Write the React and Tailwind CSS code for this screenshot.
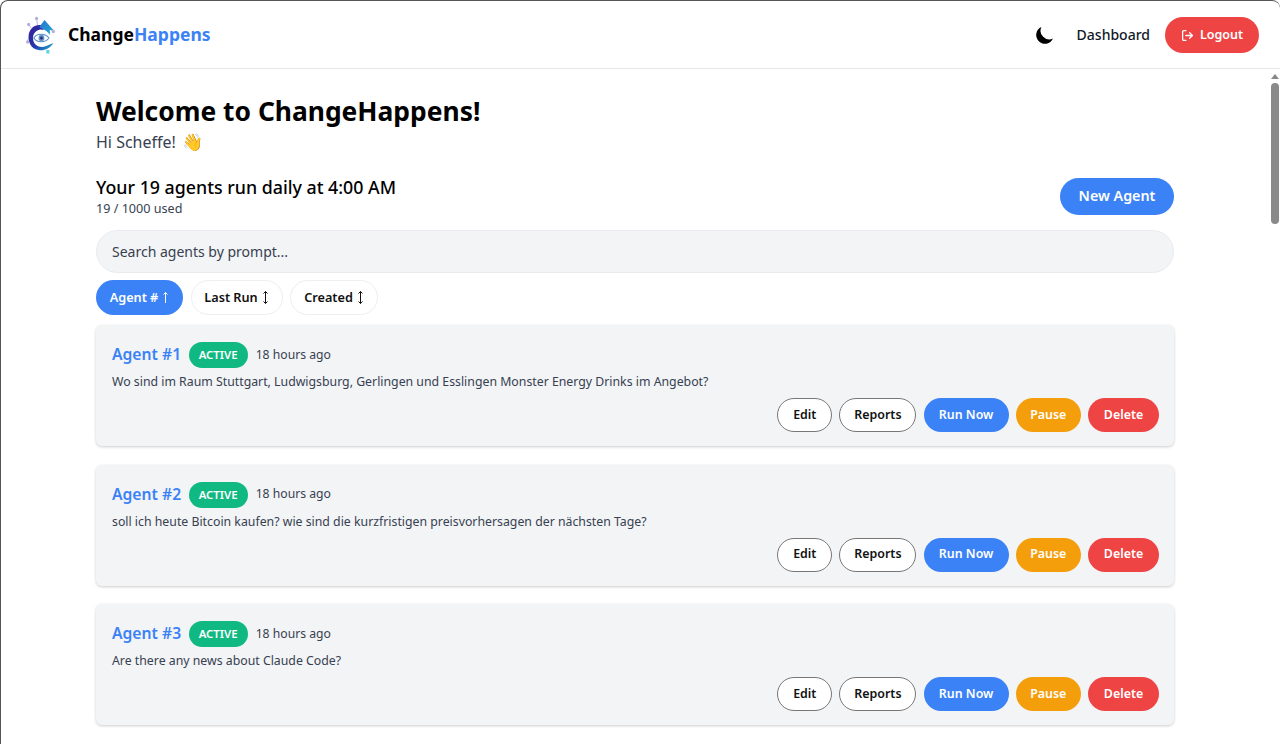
import React from 'react';
import { LogOut } from 'lucide-react';
import { HiMoon } from 'react-icons/hi';

const agents = [
  { id: 1, prompt: 'Wo sind im Raum Stuttgart, Ludwigsburg, Gerlingen und Esslingen Monster Energy Drinks im Angebot?' },
  { id: 2, prompt: 'soll ich heute Bitcoin kaufen? wie sind die kurzfristigen preisvorhersagen der nächsten Tage?' },
  { id: 3, prompt: 'Are there any news about Claude Code?' },
];

const Logo = () => (
  <svg width="30" height="38" viewBox="0 0 34 38" preserveAspectRatio="none" fill="none">
    <defs>
      <linearGradient id="logoC" x1="0" y1="0" x2="1" y2="1">
        <stop offset="0" stopColor="#3a1f9c" />
        <stop offset="0.55" stopColor="#2336a8" />
        <stop offset="1" stopColor="#19b5d8" />
      </linearGradient>
      <linearGradient id="logoArrow" x1="0" y1="0" x2="1" y2="1">
        <stop offset="0" stopColor="#2a6fd0" />
        <stop offset="1" stopColor="#1fb0d6" />
      </linearGradient>
    </defs>
    <path d="M15 9 C9 9 4 13 3 19 C2 26 6 33 14 34 C20 35 27 33 31 27 L23 30 C15 33 8 29 8 22 C8 16 14 12 20 14 L18 9 Z" fill="url(#logoC)" />
    <path d="M21 4 L31 14 L27 14 L27 19 C25 16 22 14 19 13 L15 11 Z" fill="url(#logoArrow)" />
    <path d="M9 22 C12 17 22 17 26 22 C22 27 12 27 9 22 Z" fill="#fff" stroke="#4f8fc9" strokeWidth="1.2" />
    <circle cx="17.500" cy="22" r="3.300" fill="#6d8fc9" />
    <circle cx="17.500" cy="22" r="1.500" fill="#1e2a78" />
    <g stroke="#a5a0d8" strokeWidth="0.8">
      <path d="M13 9 L12 3 M6 12 L3 9 M3 22 L1 26 M28 14 L32 16" />
    </g>
    <circle cx="12" cy="2.500" r="1.800" fill="#b3aedd" />
    <circle cx="3" cy="8.500" r="1.800" fill="#b3aedd" />
    <circle cx="1.800" cy="26" r="1.800" fill="#b3aedd" />
    <circle cx="31" cy="15.500" r="1.800" fill="#b3aedd" />
    <rect x="23" y="34" width="3.500" height="3.500" fill="#5dd5e0" />
  </svg>
);

const SortUp = () => (
  <svg width="7" height="13" viewBox="0 0 7 13" fill="none" stroke="currentColor" strokeWidth="1">
    <path d="M3.500 12 V1.500 M1.500 3.500 L3.500 1.500 L5.500 3.500" />
  </svg>
);

const SortBoth = () => (
  <svg width="7" height="15" viewBox="0 0 7 15" fill="none" stroke="currentColor" strokeWidth="1">
    <path d="M3.500 1.500 V13.500 M1.500 3.500 L3.500 1.500 L5.500 3.500 M1.500 11.500 L3.500 13.500 L5.500 11.500" />
  </svg>
);

const SortPill = ({ label, width, active, children }) => (
  <button
    className={`h-[35px] rounded-full text-[12.700px] font-semibold flex items-center justify-center gap-1 ${width} ${
      active ? 'bg-[#3b82f6] text-white' : 'bg-white text-[#111] border border-[#eceef1]'
    }`}
  >
    {label} {children}
  </button>
);

const ActionButton = ({ children, className }) => (
  <button className={`h-[34px] rounded-full text-[12.400px] font-semibold flex items-center justify-center ${className}`}>
    {children}
  </button>
);

const AgentCard = ({ agent }) => (
  <div className="bg-[#f3f4f6] rounded-md shadow-[0_1px_3px_rgba(0,0,0,0.2)] h-[121px] pl-4 pr-[15px] pt-[17px]">
    <div className="flex items-center h-[26px]">
      <span className="text-[#3b82f6] text-[15.700px] font-semibold">Agent #{agent.id}</span>
      <span className="ml-[7.500px] bg-[#10b981] text-white text-[11.400px] font-semibold rounded-full h-[26px] w-[59px] flex items-center justify-center">
        ACTIVE
      </span>
      <span className="ml-2 text-[12.200px] text-[#374151]">18 hours ago</span>
    </div>
    <p className="mt-[4px] text-[12.300px] leading-[20px] text-[#374151]">{agent.prompt}</p>
    <div className="flex justify-end gap-[7.200px] mt-[6px]">
      <ActionButton className="w-[55px] bg-white border border-[#777] text-[#111]">Edit</ActionButton>
      <ActionButton className="w-[77px] bg-white border border-[#777] text-[#111]">Reports</ActionButton>
      <ActionButton className="w-[85px] bg-[#3b82f6] text-white">Run Now</ActionButton>
      <ActionButton className="w-[65px] bg-[#f59e0b] text-white">Pause</ActionButton>
      <ActionButton className="w-[71px] bg-[#ef4444] text-white">Delete</ActionButton>
    </div>
  </div>
);

export default function App() {
  return (
    <div className="h-[744px] overflow-hidden bg-white border-t border-l border-[#555] rounded-t-lg relative font-['Noto_Sans',sans-serif] text-black">
      <header className="h-[68px] border-b border-[#e5e7eb] flex items-center pl-[25px] pr-[21px]">
        <Logo />
        <span className="ml-[12px] text-[17.500px] font-bold text-black">
          Change<span className="text-[#3b82f6]">Happens</span>
        </span>
        <div className="ml-auto flex items-center">
          <HiMoon size={22} className="mr-[21px]" />
          <span className="text-[14px] font-medium text-[#111827] mr-[15px]">Dashboard</span>
          <button className="h-[36px] w-[94px] pt-[2px] rounded-full bg-[#ef4444] text-white text-[12.500px] font-semibold flex items-center justify-center gap-1.5">
            <LogOut size={13} strokeWidth={2.4} className="-scale-x-100 rotate-180" />
            Logout
          </button>
        </div>
      </header>

      <main className="pl-[95px] w-[1173px] pt-[24px]">
        <h1 className="text-[26.400px] leading-[36px] font-bold">Welcome to ChangeHappens!</h1>
        <p className="text-[16px] leading-[24px] text-[#374151] mt-[1px]">
          Hi Scheffe! <span className="text-[17px] leading-none ml-0.5">👋</span>
        </p>

        <div className="flex items-center justify-between mt-[20px]">
          <div>
            <h2 className="text-[17.800px] leading-[26px] font-medium">Your 19 agents run daily at 4:00 AM</h2>
            <p className="text-[12.600px] leading-[18px] text-[#374151]">19 / 1000 used</p>
          </div>
          <button className="h-[37px] w-[114px] rounded-full bg-[#3b82f6] text-white text-[14.300px] font-semibold">
            New Agent
          </button>
        </div>

        <div className="mt-[12px] h-[43px] rounded-full bg-[#f3f4f6] border border-[#e8eaee] px-[15px] flex items-center text-[14px] text-[#374151]">
          Search agents by prompt...
        </div>

        <div className="flex gap-[7.500px] mt-[7px]">
          <SortPill label="Agent #" width="w-[87px]" active><SortUp /></SortPill>
          <SortPill label="Last Run" width="w-[92px]"><SortBoth /></SortPill>
          <SortPill label="Created" width="w-[88px]"><SortBoth /></SortPill>
        </div>

        <div className="flex flex-col gap-[18.500px] mt-[10px]">
          {agents.map((a) => (
            <AgentCard key={a.id} agent={a} />
          ))}
        </div>
      </main>

      {/* fake window scrollbar */}
      <div className="absolute right-0 top-[69px] bottom-0 w-[10px] flex flex-col items-center">
        <div className="mt-[4px] w-0 h-0 border-x-[4px] border-x-transparent border-b-[5px] border-b-[#888]" />
        <div className="mt-[4px] w-[8px] h-[141px] rounded-full bg-[#8a8a8a]" />
      </div>
    </div>
  );
}
